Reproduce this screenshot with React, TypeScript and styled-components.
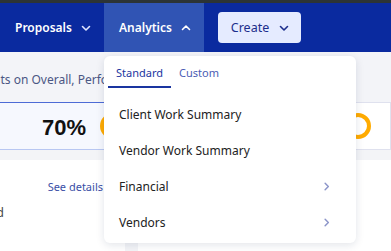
import React from 'react';
import styled, { createGlobalStyle } from 'styled-components';

const GlobalStyle = createGlobalStyle`
  body {
    margin: 0;
    background: #f3f4f7;
    font-family: "Noto Sans", "Liberation Sans", sans-serif;
  }
`;

const Chevron: React.FC<{ dir: 'down' | 'up' | 'right'; color: string; size?: number }> = ({ dir, color, size = 12 }) => {
  const d =
    dir === 'down' ? 'M2.5 4.5 L6 8 L9.5 4.5' : dir === 'up' ? 'M2.5 7.5 L6 4 L9.5 7.5' : 'M4.5 2.5 L8 6 L4.5 9.5';
  return (
    <svg width={size} height={size} viewBox="0 0 12 12" fill="none" style={{ flex: 'none' }}>
      <path d={d} stroke={color} strokeWidth="1.6" strokeLinecap="round" strokeLinejoin="round" />
    </svg>
  );
};

export default function App() {
  return (
    <>
      <GlobalStyle />
      <Page>
        <TopStrip />
        <NavBar>
          <NavTab>
            Proposals <Chevron dir="down" color="#dfe5ff" />
          </NavTab>
          <NavTab $active>
            Analytics <Chevron dir="up" color="#ffffff" />
          </NavTab>
          <CreateButton>
            Create <Chevron dir="down" color="#1c2e8c" />
          </CreateButton>
        </NavBar>

        <Content>
          <Banner>
            <BannerText>Comments on Overall, Performance and Quality</BannerText>
          </Banner>
          <StatsRow>
            <StatCard $selected>
              <StatValue>70%</StatValue>
              <Ring />
            </StatCard>
            <StatCard>
              <Ring />
            </StatCard>
          </StatsRow>
          <PanelsRow>
            <Panel>
              <PanelHeader>
                <SeeDetails>See details</SeeDetails>
              </PanelHeader>
              <PanelLabel>Completed</PanelLabel>
            </Panel>
            <Panel />
          </PanelsRow>
        </Content>

        <Menu>
          <Tabs>
            <Tab $active>Standard</Tab>
            <Tab>Custom</Tab>
          </Tabs>
          <MenuList>
            <MenuItem>Client Work Summary</MenuItem>
            <MenuItem>Vendor Work Summary</MenuItem>
            <MenuItem>
              Financial <Chevron dir="right" color="#8c95c9" size={11} />
            </MenuItem>
            <MenuItem>
              Vendors <Chevron dir="right" color="#8c95c9" size={11} />
            </MenuItem>
          </MenuList>
        </Menu>
      </Page>
    </>
  );
}

const Page = styled.div`
  position: relative;
  width: 391px;
  height: 251px;
  overflow: hidden;
`;

const TopStrip = styled.div`
  height: 3px;
  background: #2c3436;
`;

const NavBar = styled.nav`
  height: 49px;
  display: flex;
  align-items: center;
  background: #0a2a9f;
`;

const NavTab = styled.div<{ $active?: boolean }>`
  height: 100%;
  box-sizing: border-box;
  display: flex;
  align-items: center;
  gap: 8px;
  padding: 0 0 0 15px;
  color: #fff;
  font-size: 12px;
  font-weight: 600;
  background: ${(p) => (p.$active ? '#3054b4' : 'transparent')};
  &:first-child {
    width: 104px;
  }
  &:nth-child(2) {
    width: 100px;
  }
`;

const CreateButton = styled.button`
  margin-left: 14px;
  width: 83px;
  height: 31px;
  display: flex;
  align-items: center;
  justify-content: center;
  gap: 9px;
  border: none;
  border-radius: 4px;
  background: #e5ebff;
  color: #1c2e8c;
  font-family: inherit;
  font-size: 12.5px;
  padding: 0 0 0 2px;
`;

const Content = styled.div`
  display: flex;
  flex-direction: column;
`;

const Banner = styled.div`
  height: 50px;
  display: flex;
  align-items: center;
  background: #f3f4f8;
  overflow: hidden;
`;

const BannerText = styled.div`
  margin-left: -51px;
  margin-top: 4px;
  white-space: nowrap;
  color: #4b5784;
  font-size: 12px;
`;

const StatsRow = styled.div`
  display: flex;
  gap: 10px;
  height: 48px;
`;

const StatCard = styled.div<{ $selected?: boolean }>`
  flex: ${(p) => (p.$selected ? '0 0 210px' : '1 1 auto')};
  box-sizing: border-box;
  display: flex;
  align-items: center;
  gap: 14px;
  padding-left: ${(p) => (p.$selected ? '42px' : '124px')};
  background: ${(p) => (p.$selected ? '#f6f8fe' : '#ffffff')};
  border: 1px solid ${(p) => (p.$selected ? '#4d6bd6' : '#dfe1ee')};
  border-left-width: ${(p) => (p.$selected ? '0' : '1px')};
  border-bottom-color: ${(p) => (p.$selected ? '#b8c7f2' : '#dfe1ee')};
`;

const StatValue = styled.div`
  font-size: 22px;
  font-weight: 700;
  color: #111;
  font-family: "Liberation Sans", Arial, sans-serif;
  margin-top: 4px;
`;

const Ring = styled.div`
  width: 18px;
  height: 18px;
  border-radius: 50%;
  border: 4px solid #ffab00;
  flex: none;
`;

const PanelsRow = styled.div`
  display: flex;
  gap: 13px;
  margin-top: 10px;
  height: 120px;
`;

const Panel = styled.div`
  flex: 0 0 125px;
  background: #fff;
  &:last-child {
    flex: 1 1 auto;
  }
`;

const PanelHeader = styled.div`
  display: flex;
  justify-content: flex-end;
  padding: 19px 22px 0 0;
`;

const SeeDetails = styled.span`
  color: #3a4fa6;
  font-size: 11px;
`;

const PanelLabel = styled.div`
  margin: 10px 0 0 -58px;
  color: #444;
  font-size: 12px;
  white-space: nowrap;
`;

const Menu = styled.div`
  position: absolute;
  top: 56px;
  left: 104px;
  width: 252px;
  height: 187px;
  box-sizing: border-box;
  background: #fff;
  border-radius: 6px;
  box-shadow: 0 2px 8px rgba(20, 30, 70, 0.12);
  padding: 0 4px;
`;

const Tabs = styled.div`
  display: flex;
  height: 32px;
  align-items: stretch;
`;

const Tab = styled.div<{ $active?: boolean }>`
  display: flex;
  align-items: center;
  padding: 2px 8px 0;
  font-size: 11px;
  color: ${(p) => (p.$active ? '#1a35a0' : '#4b5db4')};
  border-bottom: 2px solid ${(p) => (p.$active ? '#1a35a0' : 'transparent')};
`;

const MenuList = styled.div`
  display: flex;
  flex-direction: column;
  padding-top: 8px;
`;

const MenuItem = styled.div`
  height: 36px;
  display: flex;
  align-items: center;
  justify-content: space-between;
  padding: 0 20px 0 11px;
  color: #222;
  font-size: 12px;
`;
